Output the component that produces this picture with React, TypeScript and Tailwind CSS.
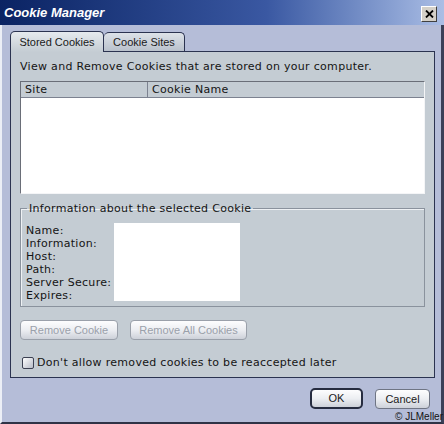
import type { ReactNode } from 'react';

const ui = { fontFamily: '"DejaVu Sans", Verdana, sans-serif' };
const btnFont = { fontFamily: '"Liberation Sans", Arial, sans-serif' };

function Btn({ children, w, disabled, primary }: { children: ReactNode; w: string; disabled?: boolean; primary?: boolean }) {
  return (
    <button
      style={btnFont}
      className={`${w} flex items-center justify-center text-[11px] bg-linear-to-b from-[#fdfdfe] via-[#eceef2] to-[#cdd1d9] ${
        primary ? 'h-[21px] rounded-[5px] border-2 border-[#262c40]' : 'h-[20px] rounded-[4px] border border-[#6f7584]'
      } ${disabled ? 'text-[#9aa0aa] border-[#9aa0aa]' : 'text-[#1a1a1a]'}`}
    >
      {children}
    </button>
  );
}

export default function App() {
  const labels = ['Name:', 'Information:', 'Host:', 'Path:', 'Server Secure:', 'Expires:'];
  return (
    <div className="relative w-[444px] h-[424px] flex flex-col bg-[#b5bdd8] overflow-hidden">
      {/* title bar */}
      <div className="h-[25px] shrink-0 flex items-center justify-between pl-[4px] pr-[7px] bg-linear-to-r from-[#0a2363] via-[#3a58a2] via-60% to-[#abbee5]">
        <span style={btnFont} className="text-white text-[13px] font-bold italic">
          Cookie Manager
        </span>
        <span className="w-[16px] h-[16px] mt-[3px] bg-[#d4d0c8] border border-t-white border-l-white border-b-[#404040] border-r-[#404040] flex items-center justify-center">
          <svg width="9" height="8" viewBox="0 0 9 8">
            <path d="M1 0.5 L8 7.5 M8 0.5 L1 7.5" stroke="#000" strokeWidth="1.8" />
          </svg>
        </span>
      </div>

      {/* body */}
      <div className="flex-1 flex flex-col border-l-2 border-l-[#eceff6] border-r-[3px] border-r-[#3b4058] border-b-2 border-b-[#2f3346]">
        <div className="flex items-end h-[20px] mt-[6px] ml-[8px]" style={btnFont}>
          <div className="relative z-10 -mb-px h-[21px] w-[94px] flex items-center justify-center text-[11px] text-[#1a1a1a] bg-linear-to-b from-[#e6eaee] to-[#c4ccd3] border border-b-0 border-[#2b3350] rounded-t-[5px]">
            Stored Cookies
          </div>
          <div className="h-[19px] w-[81px] flex items-center justify-center text-[11px] text-[#1a1a1a] bg-linear-to-b from-[#dde2e8] to-[#b9c1cc] border border-b-0 border-l-0 border-[#2b3350] rounded-t-[5px]">
            Cookie Sites
          </div>
        </div>

        <div style={ui} className="w-[425px] h-[327px] ml-[8px] bg-[#c4ccd3] border border-[#2b3350] px-[9px] pt-[8px] text-[11px] tracking-[0.3px] text-[#141414]">
          <div className="leading-[13px]">View and Remove Cookies that are stored on your computer.</div>

          <div className="mt-[8px] w-[405px] h-[113px] bg-white border border-t-[#6a6e78] border-l-[#6a6e78] border-b-[#f4f5f7] border-r-[#f4f5f7]">
            <div className="flex h-[16px] bg-[#c4ccd3] border-b border-[#7c8290] leading-[16px]">
              <div className="w-[127px] pl-[4px] border-r border-[#7c8290]">Site</div>
              <div className="flex-1 pl-[4px]">Cookie Name</div>
            </div>
          </div>

          <fieldset className="mt-[8px] w-[405px] h-[105px] border border-[#8a929d] shadow-[inset_1px_1px_0_#eef1f4] pl-[5px]">
            <legend className="ml-[1px] px-[2px] leading-[13px]">Information about the selected Cookie</legend>
            <div className="flex mt-[8px]">
              <div className="w-[88px] leading-[13px] pt-[1px]">
                {labels.map((l) => (
                  <div key={l}>{l}</div>
                ))}
              </div>
              <div className="w-[126px] h-[78px] bg-white" />
            </div>
          </fieldset>

          <div className="flex gap-[12px] mt-[13px] tracking-normal">
            <Btn w="w-[98px]" disabled>Remove Cookie</Btn>
            <Btn w="w-[117px]" disabled>Remove All Cookies</Btn>
          </div>

          <div className="flex items-center mt-[16px] ml-[2px]">
            <span className="w-[12px] h-[12px] rounded-[2px] border border-[#3c4152] bg-linear-to-br from-white to-[#b8bdc8]" />
            <span className="ml-[3px] leading-[13px]">Don't allow removed cookies to be reaccepted later</span>
          </div>
        </div>

        <div className="flex justify-end items-start gap-[12px] pt-[10px] pr-[11px]">
          <Btn w="w-[53px]" primary>OK</Btn>
          <div className="mt-[1px]">
            <Btn w="w-[55px]">Cancel</Btn>
          </div>
        </div>
      </div>

      <span style={btnFont} className="absolute right-[1px] bottom-[1px] text-[10px] leading-[12px] text-[#111]">
        © JLMeller
      </span>
    </div>
  );
}
